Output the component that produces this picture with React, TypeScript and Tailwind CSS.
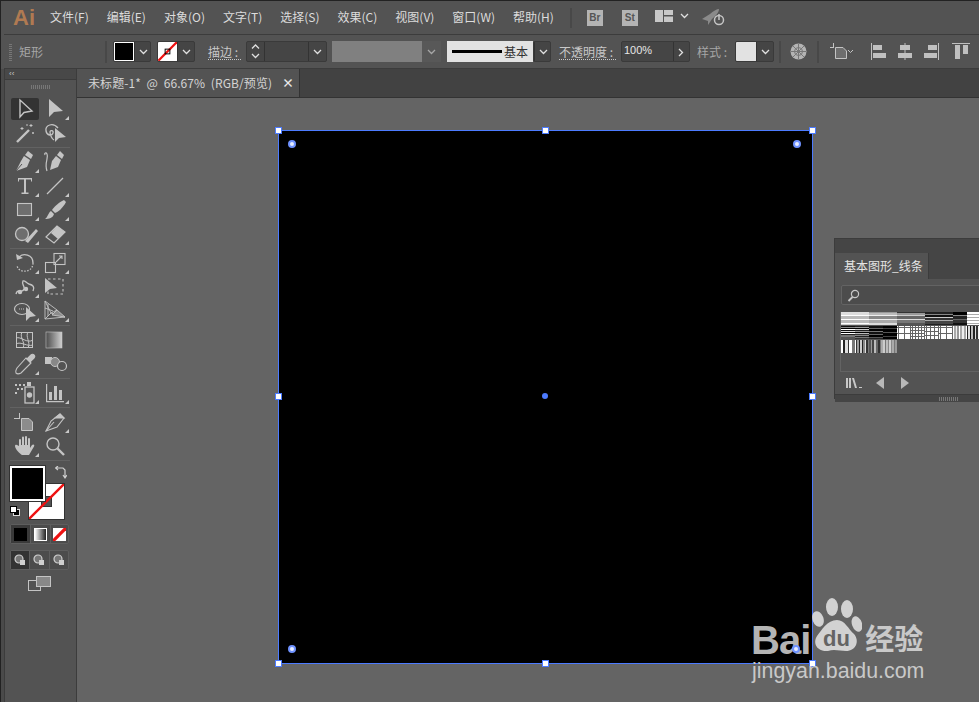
import React from "react";

const cjk = { fontFamily: '"Noto Sans CJK SC","Liberation Sans",sans-serif' };

function Corner() {
  return <span className="absolute right-[1px] bottom-[1px] w-0 h-0 border-l-[4px] border-l-transparent border-b-[4px] border-b-[#c8c8c8]" />;
}

const S = "#c4c4c4";
const paths: Record<string, React.ReactNode> = {
  sel: <path d="M7 3 L7 20 L11 15.5 L19 14 Z" fill="none" stroke={S} strokeWidth="1.4" />,
  direct: <path d="M6 2 L6 20 L11 15 L20 14 Z" fill={S} />,
  wand: <g stroke={S} fill={S}><path d="M4 21 L16 9" strokeWidth="2.4" /><path d="M9 6 v3 M7.5 7.5 h3 M18 3 v3 M16.5 4.5 h3 M20 11 v2 M19 12 h2 M14 3 v2" strokeWidth="1" /></g>,
  lasso: <g><path d="M15 7 C10 1 2 4 3 10 C4 15 9 15 10 12 C11 9 7 9 7 11 C7 14 9 18 11 19" fill="none" stroke={S} strokeWidth="1.3" /><path d="M12 7 L12 21 L16 17 L23 16 Z" fill={S} /></g>,
  pen: <g fill={S}><path d="M20 5 L15 1 L12 5 L18 9 Z" /><path d="M11 6 L17 10 L14 17 L3 21 L8 11 Z" /><path d="M3 21 L9 14" stroke="#535353" strokeWidth="1" /></g>,
  curv: <g fill={S}><path d="M21 5 L17 1 L14 5 L19 9 Z" /><path d="M13 6 L18 10 L15 17 L7 20 L9 11 Z" /><path d="M4 21 C1 12 6 8 4 4 C3 2 1 3 2 5" fill="none" stroke={S} strokeWidth="1.2" /></g>,
  type: <path d="M5 4 H19 V7.5 H18 V5.5 H13 V18.5 H15.5 V20 H8.5 V18.5 H11 V5.5 H6 V7.5 H5 Z" fill={S} />,
  line: <path d="M4 20 L20 4" stroke={S} strokeWidth="1.3" />,
  rect: <rect x="4.5" y="5.5" width="14" height="12" fill="#6e6e6e" stroke={S} strokeWidth="1.1" />,
  brush: <g fill={S}><path d="M21 2 L23 4 C20 10 15 14 12 15 L9 12 C11 9 16 4 21 2 Z" /><path d="M8 13 L11 16 C10 20 6 21 2 21 C5 19 5 15 8 13 Z" /></g>,
  blob: <g><circle cx="9" cy="12" r="6.5" fill="#6e6e6e" stroke={S} strokeWidth="1.3" /><path d="M12 19 L23 7 L25 9 L15 21 Z" fill={S} /></g>,
  eraser: <g><path d="M3 15 L14 4 L22 10 L11 21 Z" fill="none" stroke={S} strokeWidth="1.2" /><path d="M8 11 L14 4 L22 10 L15 17 Z" fill={S} /></g>,
  rotate: <g fill="none" stroke={S} strokeWidth="1.3"><path d="M6 6 C10 2 20 3 20 12" /><path d="M20 12 C20 18 15 21 10 20 C7 20 4 17 4 14" strokeDasharray="1.5 1.5" /><path d="M3 3 L4 9 L10 7" fill={S} stroke="none" /></g>,
  scale: <g fill="none" stroke={S} strokeWidth="1.1"><rect x="11" y="2.5" width="11" height="11" /><rect x="2.5" y="11.5" width="10" height="10" /><path d="M13 11 L19 5 M16 5 H19 V8" /></g>,
  warp: <g fill="none" stroke={S} strokeWidth="1.4"><path d="M3 19 C5 12 9 20 11 14 C12 10 8 10 10 6 C12 5 13 8 16 9 C20 10 22 12 20 16" /><circle cx="7" cy="17" r="1.5" fill={S} /><circle cx="13" cy="14" r="1.5" fill={S} /></g>,
  free: <g><rect x="5" y="4" width="15" height="15" fill="none" stroke={S} strokeWidth="1.1" strokeDasharray="2.5 2.5" /><path d="M2 3 L2 18 L7 14 L14 13 Z" fill={S} /></g>,
  shape: <g><ellipse cx="9" cy="10" rx="7.5" ry="5.5" fill="none" stroke={S} strokeWidth="1.2" /><path d="M6 10 h6" stroke={S} strokeDasharray="1 1" /><path d="M13 8 L13 22 L17 18 L23 17 Z" fill={S} /></g>,
  persp: <g fill="none" stroke={S} strokeWidth="0.9"><path d="M2 2 L2 20 L8 14 Z M2 2 L14 11 L8 14 M2 20 L22 18 L8 14 M5 5 L5 17 M2 9 L10 12" /><path d="M9 16 L14 11 L22 18 Z" fill="#8c8c8c" /></g>,
  mesh: <g fill="none" stroke={S} strokeWidth="1"><rect x="3.5" y="4.5" width="16" height="15" /><path d="M3 10 C8 8 14 16 20 12 M3 16 C8 13 14 19 20 17 M9 4 C6 10 13 14 10 20 M15 4 C12 9 18 14 15 20" /></g>,
  grad: <g><defs><linearGradient id="gr" x1="0" x2="1"><stop offset="0" stopColor="#4c4c4c" /><stop offset="1" stopColor="#d0d0d0" /></linearGradient></defs><rect x="3" y="4" width="16" height="16" fill="url(#gr)" stroke={S} strokeWidth="0.6" /></g>,
  drop: <g fill="none" stroke={S} strokeWidth="1.1"><path d="M13 6 L18 11 L8 21 C6 22 4 22 3 21 C2 19 3 18 4 16 Z" /><path d="M14 7 L18 3 C20 1 23 4 21 6 L17 10 Z" fill={S} /></g>,
  blend: <g><rect x="2" y="5" width="7" height="7" fill={S} /><circle cx="12" cy="10" r="4.5" fill="#888" stroke={S} /><circle cx="19" cy="14" r="4.5" fill="#535353" stroke={S} strokeWidth="1.2" /></g>,
  spray: <g fill={S}><path d="M2 3h2v2H2zM6 3h2v2H6zM10 3h2v2h-2zM4 7h2v2H4zM8 7h2v2H8zM2 11h2v2H2z" /><path d="M14 1 h4 v4 h-4z" /><rect x="12" y="6" width="9" height="16" fill="none" stroke={S} strokeWidth="1.3" /><circle cx="16.5" cy="14" r="2.7" /></g>,
  chart: <g fill={S}><path d="M3 3 h1.2 V20 H21 v1.2 H3 Z" /><rect x="6" y="11" width="3" height="8" /><rect x="11" y="5" width="3" height="14" /><rect x="16" y="9" width="3" height="10" /></g>,
  board: <g><path d="M8.5 8.5 H16 L19.5 12 V20.5 H8.5 Z" fill="#8c8c8c" stroke={S} strokeWidth="1" /><path d="M1 8.5 H7 M6.5 3 V9" stroke={S} strokeWidth="1" /></g>,
  slice: <g fill="none" stroke={S} strokeWidth="1.1"><path d="M3 21 L8 11 L17 4 L21 8 L14 17 Z" /><path d="M12 8 L21 8 L17 4 Z" fill={S} /><path d="M3 21 L11 12" /></g>,
  hand: <path d="M6 12 V6 a1 1 0 0 1 2 0 V11 H9 V3.5 a1 1 0 0 1 2 0 V11 H12 V3 a1 1 0 0 1 2 0 V11 H15 V5 a1 1 0 0 1 2 0 V14 L19 11 c1.5 -1.5 3 0 2 1.5 L16 21 H9 C7 20 2 15 2 12 c0 -2 2 -1.5 3 -.5 Z" fill={S} />,
  zoom: <g fill="none" stroke={S} strokeWidth="1.4"><circle cx="10" cy="10" r="6" /><path d="M14.5 14.5 L21 21" strokeWidth="2.4" /></g>,
};

function Tool({ n, corner, active }: { n: string; corner?: boolean; active?: boolean }) {
  return (
    <div className={`relative w-[30px] h-6 flex items-center justify-center ${active ? "bg-[#333333] bg-clip-content p-px rounded-[3px]" : ""}`}>
      <svg width="24" height="24" viewBox="0 0 24 24" overflow="visible">{paths[n]}</svg>
      {corner && <Corner />}
    </div>
  );
}

function Group({ items }: { items: [string, boolean][] }) {
  return (
    <div className="grid grid-cols-2 w-[60px]">
      {items.map(([n, c]) => <Tool key={n} n={n} corner={c} active={n === "sel"} />)}
    </div>
  );
}

const Sep = ({ cls = "" }: { cls?: string }) => <div className={`h-px w-[60px] bg-[#626262] ${cls}`} />;

function Chevron({ dir = "down" }: { dir?: "down" | "right" | "up" }) {
  const d = dir === "down" ? "M1 2 L4.5 5.5 L8 2" : dir === "up" ? "M1 5.5 L4.5 2 L8 5.5" : "M2 1 L5.5 4.5 L2 8";
  return <svg width="9" height="8" viewBox="0 0 9 8" overflow="visible"><path d={d} fill="none" stroke="#e0e0e0" strokeWidth="1.3" /></svg>;
}

function Drop({ w = 18 }: { w?: number }) {
  return <div className="h-full flex items-center justify-center border-l border-[#333333] shrink-0" style={{ width: w }}><Chevron /></div>;
}

function NoStroke({ size, thick = 2.4, dot = true }: { size: number; thick?: number; dot?: boolean }) {
  return <svg width={size} height={size} viewBox="0 0 20 20"><rect width="20" height="20" fill="#fff" /><path d="M0 20 L20 0" stroke="#ee1111" strokeWidth={thick} />{dot && <rect x="7.5" y="7.5" width="5" height="5" fill="none" stroke="#000" />}</svg>;
}

function Box({ className = "", children }: { className?: string; children?: React.ReactNode }) {
  return <div className={`h-[21px] flex items-center border border-[#3a3a3a] bg-[#454545] rounded-[2px] overflow-hidden shrink-0 ${className}`}>{children}</div>;
}

const menus = ["文件(F)", "编辑(E)", "对象(O)", "文字(T)", "选择(S)", "效果(C)", "视图(V)", "窗口(W)", "帮助(H)"];

const Label = ({ text, cls }: { text: string; cls: string }) => (
  <span className={`text-[12px] leading-[15px] text-[#c8c8c8] border-b border-dotted border-[#c8c8c8] shrink-0 ${cls}`}>{text}</span>
);

const VBar = ({ cls }: { cls: string }) => <div className={`w-[2px] h-[22px] bg-[#484848] shrink-0 ${cls}`} />;

function AlignIcon({ kind, cls }: { kind: number; cls: string }) {
  const c = "#c0c0c0";
  const g = [
    <g key="0" fill={c}><rect x="0" y="0" width="1" height="17" /><rect x="2" y="2" width="9" height="5" /><rect x="2" y="10" width="13" height="5" /></g>,
    <g key="1" fill={c}><rect x="6.5" y="0" width="1" height="17" /><rect x="2" y="2" width="10" height="5" /><rect x="0" y="10" width="14" height="5" /></g>,
    <g key="2" fill={c}><rect x="14" y="0" width="1" height="17" /><rect x="4" y="2" width="9" height="5" /><rect x="0" y="10" width="13" height="5" /></g>,
    <g key="3" fill={c}><rect x="0" y="0" width="18" height="1" /><rect x="3" y="2" width="5" height="14" /><rect x="11" y="2" width="5" height="9" /></g>,
  ][kind];
  return <svg width="18" height="17" viewBox="0 0 18 17" className={`shrink-0 ${cls}`}>{g}</svg>;
}

function Grip({ cls = "" }: { cls?: string }) {
  return <div className={`w-[20px] h-[4px] bg-[repeating-linear-gradient(90deg,#777777_0,#777777_1px,transparent_1px,transparent_2px)] ${cls}`} />;
}

type Band = [string, number];
type Sw = { h?: Band[]; v?: Band[]; grid?: number };

const row1: Sw[] = [
  { h: [["#dddddd", 3], ["#ffffff", 1], ["#bbbbbb", 3], ["#ffffff", 1], ["#bbbbbb", 3], ["#ffffff", 1], ["#cccccc", 1]] },
  { h: [["#dddddd", 3], ["#ffffff", 1], ["#bbbbbb", 3], ["#ffffff", 1], ["#bbbbbb", 3], ["#ffffff", 1], ["#cccccc", 1]] },
  { h: [["#999999", 1], ["#bbbbbb", 2], ["#eeeeee", 1], ["#888888", 3], ["#eeeeee", 1], ["#aaaaaa", 3], ["#dddddd", 2]] },
  { h: [["#999999", 1], ["#bbbbbb", 2], ["#eeeeee", 1], ["#888888", 3], ["#eeeeee", 1], ["#aaaaaa", 3], ["#dddddd", 2]] },
  { h: [["#333333", 1], ["#999999", 2], ["#cccccc", 1], ["#666666", 3], ["#dddddd", 1], ["#777777", 3], ["#555555", 2]] },
  { h: [["#333333", 1], ["#999999", 2], ["#cccccc", 1], ["#666666", 3], ["#dddddd", 1], ["#777777", 3], ["#555555", 2]] },
  { h: [["#222222", 2], ["#888888", 1], ["#111111", 2], ["#cccccc", 1], ["#333333", 2], ["#aaaaaa", 1], ["#444444", 3], ["#222222", 1]] },
  { h: [["#222222", 2], ["#888888", 1], ["#111111", 2], ["#cccccc", 1], ["#333333", 2], ["#aaaaaa", 1], ["#444444", 3], ["#222222", 1]] },
  { h: [["#000000", 3], ["#888888", 1], ["#222222", 3], ["#666666", 1], ["#333333", 3], ["#111111", 2]] },
  { h: [["#ffffff", 2], ["#aaaaaa", 1], ["#ffffff", 2], ["#aaaaaa", 1], ["#ffffff", 2], ["#aaaaaa", 1], ["#ffffff", 2], ["#aaaaaa", 1], ["#ffffff", 1]] },
];
const row2: Sw[] = [
  { h: [["#111111", 1], ["#888888", 1], ["#000000", 1], ["#ffffff", 1], ["#111111", 1], ["#dddddd", 1], ["#000000", 1], ["#ffffff", 1], ["#222222", 1], ["#777777", 2], ["#555555", 2]] },
  { h: [["#222222", 1], ["#999999", 1], ["#000000", 1], ["#cccccc", 1], ["#222222", 1], ["#999999", 1], ["#000000", 1], ["#bbbbbb", 1], ["#333333", 1], ["#888888", 1], ["#222222", 1], ["#777777", 1], ["#333333", 1]] },
  { h: [["#111111", 2], ["#666666", 1], ["#000000", 2], ["#777777", 1], ["#111111", 2], ["#666666", 1], ["#000000", 2], ["#555555", 1], ["#222222", 1]] },
  { h: [["#000000", 2], ["#444444", 1], ["#000000", 3], ["#555555", 1], ["#000000", 3], ["#444444", 1], ["#000000", 2]] },
  { grid: 6 }, { grid: 3 }, { grid: 4 }, { grid: 6 },
  { v: [["#ffffff", 1], ["#aaaaaa", 2], ["#eeeeee", 1], ["#999999", 2], ["#ffffff", 1], ["#aaaaaa", 2], ["#eeeeee", 2], ["#aaaaaa", 2], ["#ffffff", 1]] },
  { v: [["#222222", 1], ["#dddddd", 2], ["#111111", 1], ["#bbbbbb", 2], ["#222222", 2], ["#dddddd", 1], ["#333333", 2], ["#eeeeee", 2], ["#222222", 1]] },
];
const row3: Sw[] = [
  { v: [["#ffffff", 2], ["#222222", 2], ["#dddddd", 3], ["#333333", 1], ["#ffffff", 3], ["#777777", 3]] },
  { v: [["#ffffff", 1], ["#333333", 1], ["#999999", 2], ["#222222", 1], ["#cccccc", 2], ["#222222", 1], ["#888888", 2], ["#dddddd", 1], ["#333333", 2], ["#777777", 1]] },
  { v: [["#555555", 2], ["#999999", 1], ["#444444", 2], ["#bbbbbb", 2], ["#666666", 2], ["#333333", 2], ["#777777", 1], ["#aaaaaa", 2]] },
  { v: [["#cccccc", 2], ["#777777", 1], ["#bbbbbb", 2], ["#888888", 1], ["#cccccc", 2], ["#888888", 1], ["#aaaaaa", 2], ["#777777", 1], ["#999999", 2]] },
];

function Swatch({ s }: { s: Sw }) {
  const out: React.ReactNode[] = [];
  let pos = 0;
  (s.h || []).forEach(([c, n], i) => { out.push(<rect key={i} x="0" y={pos} width="14" height={n} fill={c} />); pos += n; });
  pos = 0;
  (s.v || []).forEach(([c, n], i) => { out.push(<rect key={i} x={pos} y="0" width={n} height="14" fill={c} />); pos += n; });
  if (s.grid) {
    for (let t = 1, i = 0; t < 14; t += s.grid, i++) {
      out.push(<rect key={"h" + i} x="0" y={t} width="14" height="1" fill="#666666" />);
      out.push(<rect key={"v" + i} x={t} y="0" width="1" height="14" fill="#666666" />);
    }
  }
  return <svg width="14" height="13" viewBox="0 0 14 13" className="shrink-0"><rect width="14" height="13" fill="#ffffff" />{out}</svg>;
}

function Handle({ cls }: { cls: string }) {
  return <div className={`absolute w-[7px] h-[7px] bg-white border border-[#4c7bff] ${cls}`} />;
}
function Widget({ cls }: { cls: string }) {
  return <div className={`absolute w-[8px] h-[8px] rounded-full bg-[#e8eeff] border-2 border-[#6f92ff] ${cls}`} />;
}

export default function App() {
  return (
    <div className="w-[979px] h-[702px] overflow-hidden bg-[#535353] flex flex-col border-t border-l border-[#222222]" style={cjk}>
      {/* menu bar */}
      <div className="h-[33px] flex items-center shrink-0 pl-[12px]">
        <span className="w-[37px] text-[22px] font-bold leading-none text-[#b07a52] shrink-0" style={{ fontFamily: '"Liberation Sans",sans-serif' }}>Ai</span>
        <div className="flex gap-[18px] text-[12px] leading-[18px] -mt-[2px] text-[#dcdcdc]">
          {menus.map((m) => <span key={m} className="whitespace-nowrap">{m}</span>)}
        </div>
        <div className="w-[2px] h-[20px] bg-[#484848] ml-[16px]" />
        <div className="ml-[15px] w-4 h-4 bg-[#b4b4b4] text-[#555555] text-[10px] font-bold flex items-center justify-center" style={{ fontFamily: '"Liberation Sans",sans-serif' }}>Br</div>
        <div className="ml-[19px] w-4 h-4 bg-[#b4b4b4] text-[#555555] text-[10px] font-bold flex items-center justify-center" style={{ fontFamily: '"Liberation Sans",sans-serif' }}>St</div>
        <svg width="18" height="12" viewBox="0 0 18 12" className="ml-[17px] -mt-[3px]"><path d="M0 0H8V12H0Z M9 0H18V5H9Z M9 6.5H18V12H9Z" fill="#c8c8c8" /></svg>
        <div className="ml-[7px] -mt-[4px] flex"><Chevron /></div>
        <svg width="24" height="18" viewBox="0 0 24 18" className="ml-[13px] shrink-0">
          <path d="M0 10 L8 5 C11 2 15 0 17 0 C17 3 14 7 10 10 L6 16 L6 12 Z" fill="#8a8a8a" />
          <circle cx="17" cy="11" r="4.5" fill="none" stroke="#c4c4c4" strokeWidth="1.5" />
          <path d="M17 5 V11" stroke="#c4c4c4" strokeWidth="1.5" />
        </svg>
      </div>

      {/* control bar */}
      <div className="h-[35px] ml-[3px] flex items-center shrink-0 border-t border-b border-[#3c3c3c] bg-[#535353]">
        <div className="w-[3px] h-[18px] ml-[5px] shrink-0 bg-[repeating-linear-gradient(0deg,#777777_0,#777777_1px,transparent_1px,transparent_2px)]" />
        <span className="ml-[7px] w-[24px] text-[12px] text-[#a6a6a6] shrink-0">矩形</span>
        <VBar cls="ml-[62px]" />
        <Box className="ml-[6px] w-[38px]">
          <div className="w-[20px] h-[19px] bg-black border border-white shrink-0" />
          <Drop />
        </Box>
        <Box className="ml-[6px] w-[38px]">
          <div className="w-[19px] h-[19px] shrink-0"><NoStroke size={19} /></div>
          <Drop />
        </Box>
        <Label text="描边 :" cls="ml-[13px] w-[33px]" />
        <Box className="ml-[5px] w-[81px]">
          <div className="w-[18px] h-full flex flex-col items-center justify-center gap-[1px] border-r border-[#333333] shrink-0"><Chevron dir="up" /><Chevron /></div>
          <div className="flex-1" />
          <Drop />
        </Box>
        <div className="ml-[5px] w-[90px] h-[21px] bg-[#808080] shrink-0" />
        <div className="w-[19px] h-[21px] bg-[#5c5c5c] flex items-center justify-center shrink-0 opacity-60"><Chevron /></div>
        <div className="ml-[6px] w-[86px] h-[21px] bg-[#e2e2e2] flex items-center shrink-0">
          <div className="ml-[5px] w-[50px] h-[3px] bg-black" />
          <span className="ml-[2px] text-[12px] text-[#333333]">基本</span>
        </div>
        <Box className="w-[18px]"><Drop w={17} /></Box>
        <Label text="不透明度 :" cls="ml-[8px] w-[57px]" />
        <Box className="ml-[5px] w-[69px]">
          <span className="w-[51px] pl-[2px] -mt-[3px] text-[11px] text-[#e6e6e6] shrink-0" style={{ fontFamily: '"Liberation Sans",sans-serif' }}>100%</span>
          <div className="flex-1 h-full flex items-center justify-center border-l border-[#333333]"><Chevron dir="right" /></div>
        </Box>
        <span className="ml-[7px] w-[32px] text-[12px] text-[#a6a6a6] shrink-0">样式 :</span>
        <Box className="ml-[6px] w-[39px]">
          <div className="w-[20px] h-[20px] bg-[#e2e2e2] shrink-0" />
          <Drop />
        </Box>
        <VBar cls="ml-[5px]" />
        <svg width="17" height="17" viewBox="0 0 17 17" className="ml-[9px] shrink-0">
          <circle cx="8.5" cy="8.5" r="8" fill="#b4b4b4" />
          <g stroke="#777777" strokeWidth="1"><path d="M8.5 1V16M1 8.5H16M3 3L14 14M14 3L3 14" /><circle cx="8.5" cy="8.5" r="4" fill="none" /></g>
        </svg>
        <VBar cls="ml-[10px]" />
        <svg width="24" height="17" viewBox="0 0 24 17" className="ml-[11px] shrink-0">
          <path d="M5.5 4.5 H13 L16.5 8 V15.5 H5.5 Z" fill="#6e6e6e" stroke="#c4c4c4" />
          <path d="M0 4.5 H4 M3.5 0 V4" stroke="#c4c4c4" />
          <path d="M18 7 L20.5 9.5 L23 7" stroke="#c4c4c4" fill="none" />
        </svg>
        <AlignIcon kind={0} cls="ml-[17px]" />
        <AlignIcon kind={1} cls="ml-[9px]" />
        <AlignIcon kind={2} cls="ml-[8px]" />
        <AlignIcon kind={3} cls="ml-[10px]" />
      </div>

      {/* work area */}
      <div className="flex-1 flex min-h-0">
        <div className="w-[3px] bg-[#4a4a4a] shrink-0" />
        {/* tools */}
        <div className="w-[73px] shrink-0 bg-[#535353] border-l border-r border-[#3c3c3c] flex flex-col items-center">
          <div className="w-full h-[11px] bg-[#484848] border-b border-[#3c3c3c] shrink-0 text-[8px] leading-[10px] text-[#c8c8c8] pl-[4px]" style={{ fontFamily: '"Liberation Sans",sans-serif' }}>‹‹</div>
          <Grip cls="mt-[5px] mb-[8px]" />
          <div className="flex flex-col items-center -ml-[2px]">
            <Group items={[["sel", false], ["direct", true], ["wand", false], ["lasso", false]]} />
            <Sep cls="my-[2px]" />
            <Group items={[["pen", true], ["curv", false], ["type", true], ["line", true], ["rect", true], ["brush", true], ["blob", true], ["eraser", true]]} />
            <Sep cls="my-[2px]" />
            <Group items={[["rotate", true], ["scale", true], ["warp", true], ["free", false], ["shape", true], ["persp", true]]} />
            <Sep cls="my-[2px]" />
            <Group items={[["mesh", false], ["grad", false], ["drop", true], ["blend", false]]} />
            <Sep cls="my-[2px]" />
            <Group items={[["spray", true], ["chart", true]]} />
            <Sep cls="my-[2px]" />
            <Group items={[["board", false], ["slice", true], ["hand", true], ["zoom", false]]} />
            <Sep cls="mt-[2px]" />
          </div>
          {/* fill and stroke */}
          <div className="relative w-[60px] h-[58px] shrink-0 mt-[5px] -ml-[2px]">
            <div className="absolute left-[19px] top-[18px] w-[35px] h-[35px] border-[12px] border-white shadow-[inset_0_0_0_1px_#333333] outline outline-1 outline-[#333333]" />
            <svg width="35" height="35" viewBox="0 0 35 35" className="absolute left-[19px] top-[18px]"><path d="M0 35 L35 0" stroke="#ee1111" strokeWidth="2.4" /></svg>
            <div className="absolute left-0 top-0 w-[35px] h-[35px] bg-black border-2 border-white outline outline-1 outline-[#333333]" />
            <svg width="12" height="14" viewBox="0 0 12 14" className="absolute left-[45px] top-0"><path d="M1 2 H8 L10 4 V11 M8 9 L10 12 L12 9 M3 0 L0.5 2 L3 4" fill="none" stroke="#d0d0d0" strokeWidth="1.2" /></svg>
            <div className="absolute left-0 top-[40px] w-[11px] h-[11px]">
              <div className="absolute left-[3px] top-[3px] w-[7px] h-[7px] bg-black border border-[#dddddd]" />
              <div className="absolute left-0 top-0 w-[7px] h-[7px] bg-white border border-black" />
            </div>
          </div>
          {/* modes */}
          <div className="w-[59px] h-5 -ml-[2px] flex bg-[#4c4c4c] border border-[#5e5e5e] rounded-[2px] shrink-0">
            <div className="w-[19px] bg-[#3a3a3a] flex items-center justify-center"><div className="w-[13px] h-[13px] bg-black" /></div>
            <div className="w-[20px] border-l border-[#5e5e5e] flex items-center justify-center"><div className="w-[13px] h-[13px] border border-white bg-[linear-gradient(90deg,#ffffff,#222222)]" /></div>
            <div className="flex-1 border-l border-[#5e5e5e] flex items-center justify-center"><NoStroke size={13} thick={5} dot={false} /></div>
          </div>
          <div className="w-[59px] h-5 -ml-[2px] mt-[6px] flex bg-[#4c4c4c] border border-[#5e5e5e] rounded-[2px] shrink-0">
            {[0, 1, 2].map((i) => (
              <div key={i} className={`flex-1 flex items-center justify-center ${i === 0 ? "bg-[#333333]" : "border-l border-[#5e5e5e]"}`}>
                <svg width="12" height="12" viewBox="0 0 12 12"><circle cx="5" cy="5" r="4" fill="#777" stroke="#d0d0d0" strokeWidth="1.2" /><rect x="6" y="6" width="5" height="5" fill="#d0d0d0" /></svg>
              </div>
            ))}
          </div>
          <svg width="23" height="15" viewBox="0 0 23 15" className="mt-[6px] -ml-[2px] shrink-0">
            <rect x="0.5" y="4.5" width="12" height="10" fill="none" stroke="#c4c4c4" />
            <rect x="8.5" y="0.5" width="14" height="10" fill="#888888" stroke="#c4c4c4" />
          </svg>
        </div>

        {/* document */}
        <div className="flex-1 flex flex-col min-w-0">
          <div className="h-[29px] bg-[#424242] shrink-0 border-b border-[#333333] flex">
            <div className="w-[223px] bg-[#535353] border-r border-[#333333] flex items-center pl-[11px] text-[12px] text-[#d4d4d4] whitespace-pre">
              <span className="w-[194px] tracking-[0.1px]">未标题-1*  @  66.67%  (RGB/预览)</span>
              <span className="text-[12px] leading-none font-bold text-[#e8e8e8]">×</span>
            </div>
          </div>
          <div className="relative flex-1 bg-[#646464] overflow-hidden">
            {/* artboard */}
            <div className="absolute left-[201px] top-[32px] w-[535px] h-[534px] bg-black border border-[#4c7bff]">
              <Handle cls="-left-[4px] -top-[4px]" />
              <Handle cls="left-[263px] -top-[4px]" />
              <Handle cls="-right-[4px] -top-[4px]" />
              <Handle cls="-left-[4px] top-[262px]" />
              <Handle cls="-right-[4px] top-[262px]" />
              <Handle cls="-left-[4px] -bottom-[4px]" />
              <Handle cls="left-[263px] -bottom-[4px]" />
              <Handle cls="-right-[4px] -bottom-[4px]" />
              <div className="absolute left-[263px] top-[262px] w-[6px] h-[6px] rounded-full bg-[#4c7bff]" />
              <Widget cls="left-[9px] top-[9px]" />
              <Widget cls="right-[11px] top-[9px]" />
              <Widget cls="left-[9px] bottom-[10px]" />
            </div>

            {/* floating panel */}
            <div className="absolute left-[757px] top-[140px] w-[160px] h-[161px] bg-[#535353] border border-[#3c3c3c] flex flex-col">
              <div className="h-[14px] bg-[#454545] shrink-0" />
              <div className="h-[26px] bg-[#454545] flex shrink-0">
                <div className="w-[94px] bg-[#535353] border-r border-[#3c3c3c] text-[12px] text-[#e4e4e4] flex items-center pl-[9px] whitespace-nowrap">基本图形_线条</div>
              </div>
              <div className="mx-[6px] mt-[6px] h-[20px] border border-[#636363] rounded-[2px] bg-[#4c4c4c] flex items-center pl-[5px] shrink-0">
                <svg width="13" height="13" viewBox="0 0 13 13"><circle cx="8" cy="5" r="3.6" fill="none" stroke="#c8c8c8" strokeWidth="1.2" /><path d="M5.5 8 L1.5 12" stroke="#c8c8c8" strokeWidth="1.8" /></svg>
              </div>
              <div className="ml-[5px] mr-[6px] mt-[7px] h-[60px] border-l border-b border-[#636363] shrink-0 flex flex-col">
                <div className="flex">{row1.map((s, i) => <Swatch key={i} s={s} />)}</div>
                <div className="flex mt-px">{row2.map((s, i) => <Swatch key={i} s={s} />)}</div>
                <div className="flex mt-px">{row3.map((s, i) => <Swatch key={i} s={s} />)}</div>
              </div>
              <div className="h-[22px] flex items-center pl-[11px] gap-[14px] shrink-0">
                <svg width="16" height="12" viewBox="0 0 16 12"><path d="M0 1H2V11H0Z M3 1H5V11H3Z M6 1 L8 1 L11 11 L9 11 Z" fill="#c8c8c8" /><path d="M13 10.5H16" stroke="#c8c8c8" /></svg>
                <svg width="8" height="12" viewBox="0 0 8 12"><path d="M8 0V12L0 6Z" fill="#b8b8b8" /></svg>
                <svg width="8" height="12" viewBox="0 0 8 12" className="ml-[3px]"><path d="M0 0V12L8 6Z" fill="#b8b8b8" /></svg>
              </div>
              <div className="h-[8px] mt-auto bg-[#454545] border-t border-[#3c3c3c] flex justify-center items-center pl-[70px] shrink-0"><Grip /></div>
            </div>

            {/* watermark */}
            <div className="absolute left-[674px] top-[515px] w-[200px] text-[#c9c9c9]">
              <div className="flex items-start h-[60px]">
                <span className="text-[40px] font-bold leading-[38px] mt-[8px] tracking-[-1px] text-[#b4b4b4]" style={{ fontFamily: '"Liberation Sans",sans-serif' }}>Bai</span>
                <svg width="50" height="60" viewBox="0 0 50 60" className="ml-[2px] -mt-[19px] shrink-0">
                  <g fill="#d2d2d2">
                    <ellipse cx="6" cy="25" rx="5.5" ry="8" transform="rotate(-20 6 25)" />
                    <ellipse cx="20" cy="13" rx="6" ry="9" />
                    <ellipse cx="35" cy="15" rx="6" ry="9" />
                    <ellipse cx="45" cy="30" rx="5" ry="8" transform="rotate(-20 45 30)" />
                    <path d="M25 26 C33 26 36 35 42 40 C48 47 44 57 34 57 C28 57 22 55 16 57 C6 58 0 50 5 42 C10 36 15 26 25 26 Z" />
                  </g>
                  <text x="24.5" y="52" textAnchor="middle" fontSize="22" fontWeight="bold" fill="#646464" style={{ fontFamily: '"Liberation Sans",sans-serif' }}>du</text>
                </svg>
                <span className="text-[29px] leading-[32px] font-bold mt-[8px] ml-[3px] whitespace-nowrap">经验</span>
              </div>
              <div className="-mt-[14px] pl-[1px] text-[21.4px] leading-[24px] whitespace-nowrap" style={{ fontFamily: '"Liberation Sans",sans-serif' }}>jingyan.baidu.com</div>
            </div>
            <Widget cls="left-[715px] top-[547px]" />
          </div>
        </div>
      </div>
    </div>
  );
}
